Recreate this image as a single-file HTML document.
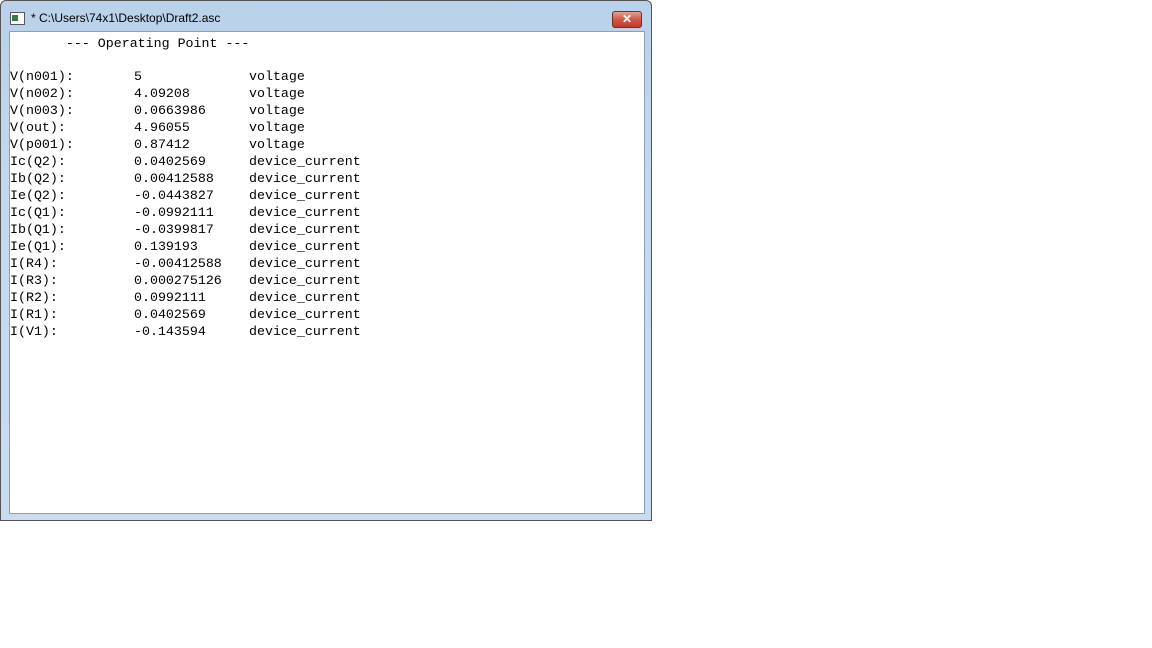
<!DOCTYPE html>
<html><head><style>
body{margin:0;width:1152px;height:648px;background:#fff;position:relative;overflow:hidden;font-family:"Liberation Sans",sans-serif}
.win{position:absolute;left:0;top:0;width:652px;height:521px;background:linear-gradient(#b9d1ea,#c4d9ef 40%,#c9dcf0);border:1px solid #555;border-radius:6px 6px 0 0;box-sizing:border-box}
.title{position:absolute;left:30px;top:10px;font-size:12px;color:#000}
.icon{position:absolute;left:9px;top:11px;width:13px;height:11px;background:#fff;border:1px solid #556}
.icon:before{content:"";position:absolute;left:1px;top:2px;width:6px;height:6px;background:#3a7a4a}
.close{position:absolute;left:611px;top:10px;width:30px;height:17px;border:1px solid #7a2b22;border-radius:3px;background:linear-gradient(#e8a090,#d0584a 50%,#c03a2c);box-sizing:border-box;color:#fff;font-size:12px;font-weight:bold;text-align:center;line-height:15px}
.client{position:absolute;left:8px;top:30px;width:636px;height:483px;background:#fff;border:1px solid #8aa0b8;box-sizing:border-box}
.t{position:absolute;font-family:"Liberation Mono",monospace;font-size:13.3px;color:#000;white-space:pre;line-height:17px}
</style></head><body>
<div class="win">
<div class="icon"></div>
<div class="title">* C:\Users\74x1\Desktop\Draft2.asc</div>
<div class="close">✕</div>
<div class="client"></div>
</div>
<div class="t" style="left:10px;top:35px">       --- Operating Point ---</div>
<div class="t" style="left:10px;top:68px">V(n001):
V(n002):
V(n003):
V(out):
V(p001):
Ic(Q2):
Ib(Q2):
Ie(Q2):
Ic(Q1):
Ib(Q1):
Ie(Q1):
I(R4):
I(R3):
I(R2):
I(R1):
I(V1):</div>
<div class="t" style="left:134px;top:68px">5
4.09208
0.0663986
4.96055
0.87412
0.0402569
0.00412588
-0.0443827
-0.0992111
-0.0399817
0.139193
-0.00412588
0.000275126
0.0992111
0.0402569
-0.143594</div>
<div class="t" style="left:249px;top:68px">voltage
voltage
voltage
voltage
voltage
device_current
device_current
device_current
device_current
device_current
device_current
device_current
device_current
device_current
device_current
device_current</div>
</body></html>
